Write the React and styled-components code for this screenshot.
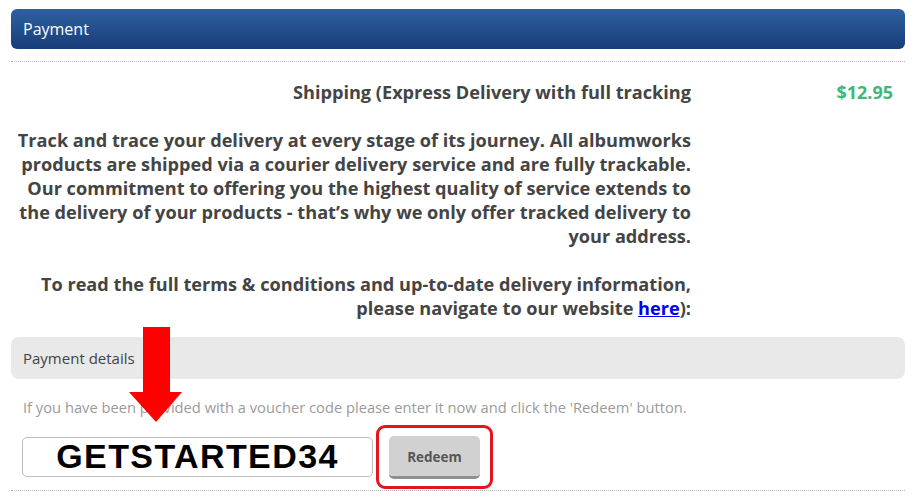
import React from "react";
import styled, { createGlobalStyle } from "styled-components";

const Global = createGlobalStyle`
  html, body { margin: 0; padding: 0; background: #fff; }
  body { font-family: "Open Sans", "Liberation Sans", Arial, sans-serif; }
  * { box-sizing: border-box; }
`;

const Page = styled.div`
  position: relative;
  width: 918px;
  height: 497px;
  padding: 9px 13px 0 11px;
  overflow: hidden;
`;

const HeaderBar = styled.div`
  height: 40px;
  border-radius: 6px;
  background: linear-gradient(to bottom, #2e60a0 0%, #234f8c 50%, #163d78 100%);
  color: #fff;
  font-size: 16px;
  display: flex;
  align-items: center;
  padding-left: 12px;
`;

const Dotted = styled.div`
  border-top: 1px dotted #b5b5b5;
  margin-top: ${(p) => p.$top}px;
`;

const ShippingRow = styled.div`
  display: flex;
  margin-top: 18px;
  font-size: 18.15px;
  font-weight: 700;
  line-height: 24px;
  color: #444;
`;

const Description = styled.div`
  width: 680px;
  text-align: right;
`;

const Price = styled.div`
  flex: 1;
  text-align: right;
  padding-right: 12px;
  font-size: 18px;
  color: #3fb878;
`;

const Link = styled.a`
  color: #0000ee;
  text-decoration: underline;
`;

const SubHeader = styled.div`
  margin-top: 17px;
  height: 42px;
  border-radius: 8px;
  background: #e9e9e9;
  color: #444;
  font-size: 15px;
  display: flex;
  align-items: center;
  padding-left: 12px;
`;

const Note = styled.p`
  margin: 18px 0 0 12px;
  font-size: 14.7px;
  line-height: 20px;
  color: #9b9b9b;
`;

const VoucherRow = styled.div`
  display: flex;
  align-items: center;
  margin-top: 7px;
  padding-left: 11px;
  gap: 3px;
`;

const CodeBox = styled.div`
  width: 351px;
  height: 40px;
  border: 1px solid #bdbdbd;
  border-radius: 5px;
  display: flex;
  align-items: center;
  justify-content: center;
  font-family: "Liberation Sans", Arial, sans-serif;
  font-weight: 700;
  font-size: 34px;
  letter-spacing: 1.4px;
  color: #000;
`;

const Highlight = styled.div`
  border: 3px solid #e3151f;
  border-radius: 9px;
  padding: 8px 10px 7px 10px;
  margin-top: 1px;
`;

const RedeemButton = styled.button`
  width: 91px;
  height: 43px;
  border: none;
  border-bottom: 3px solid #8f8f8f;
  border-radius: 5px;
  background: #d1d1d1;
  color: #555;
  font-family: "Open Sans", "Liberation Sans", Arial, sans-serif;
  font-weight: 700;
  font-size: 13.5px;
  padding: 2px 0 0;
  display: block;
`;

const ArrowMark = styled.svg`
  position: absolute;
  left: 129px;
  top: 327px;
`;

export default function App() {
  return (
    <>
      <Global />
      <Page>
        <HeaderBar>Payment</HeaderBar>
        <Dotted $top={12} />
        <ShippingRow>
          <Description>
            Shipping (Express Delivery with full tracking
            <br />
            <br />
            Track and trace your delivery at every stage of its journey. All albumworks
            products are shipped via a courier delivery service and are fully trackable.
            Our commitment to offering you the highest quality of service extends to
            the delivery of your products - that’s why we only offer tracked delivery to
            your address.
            <br />
            <br />
            To read the full terms &amp; conditions and up-to-date delivery information,
            please navigate to our website <Link href="#">here</Link>):
          </Description>
          <Price>$12.95</Price>
        </ShippingRow>
        <SubHeader>Payment details</SubHeader>
        <Note>
          If you have been provided with a voucher code please enter it now and click the
          'Redeem' button.
        </Note>
        <VoucherRow>
          <CodeBox>GETSTARTED34</CodeBox>
          <Highlight>
            <RedeemButton>Redeem</RedeemButton>
          </Highlight>
        </VoucherRow>
        <Dotted $top={1} />
        <ArrowMark width="54" height="96" viewBox="0 0 54 96">
          <polygon points="14,0 41,0 41,65 53,65 27,95 0,65 14,65" fill="#fe0000" />
        </ArrowMark>
      </Page>
    </>
  );
}
